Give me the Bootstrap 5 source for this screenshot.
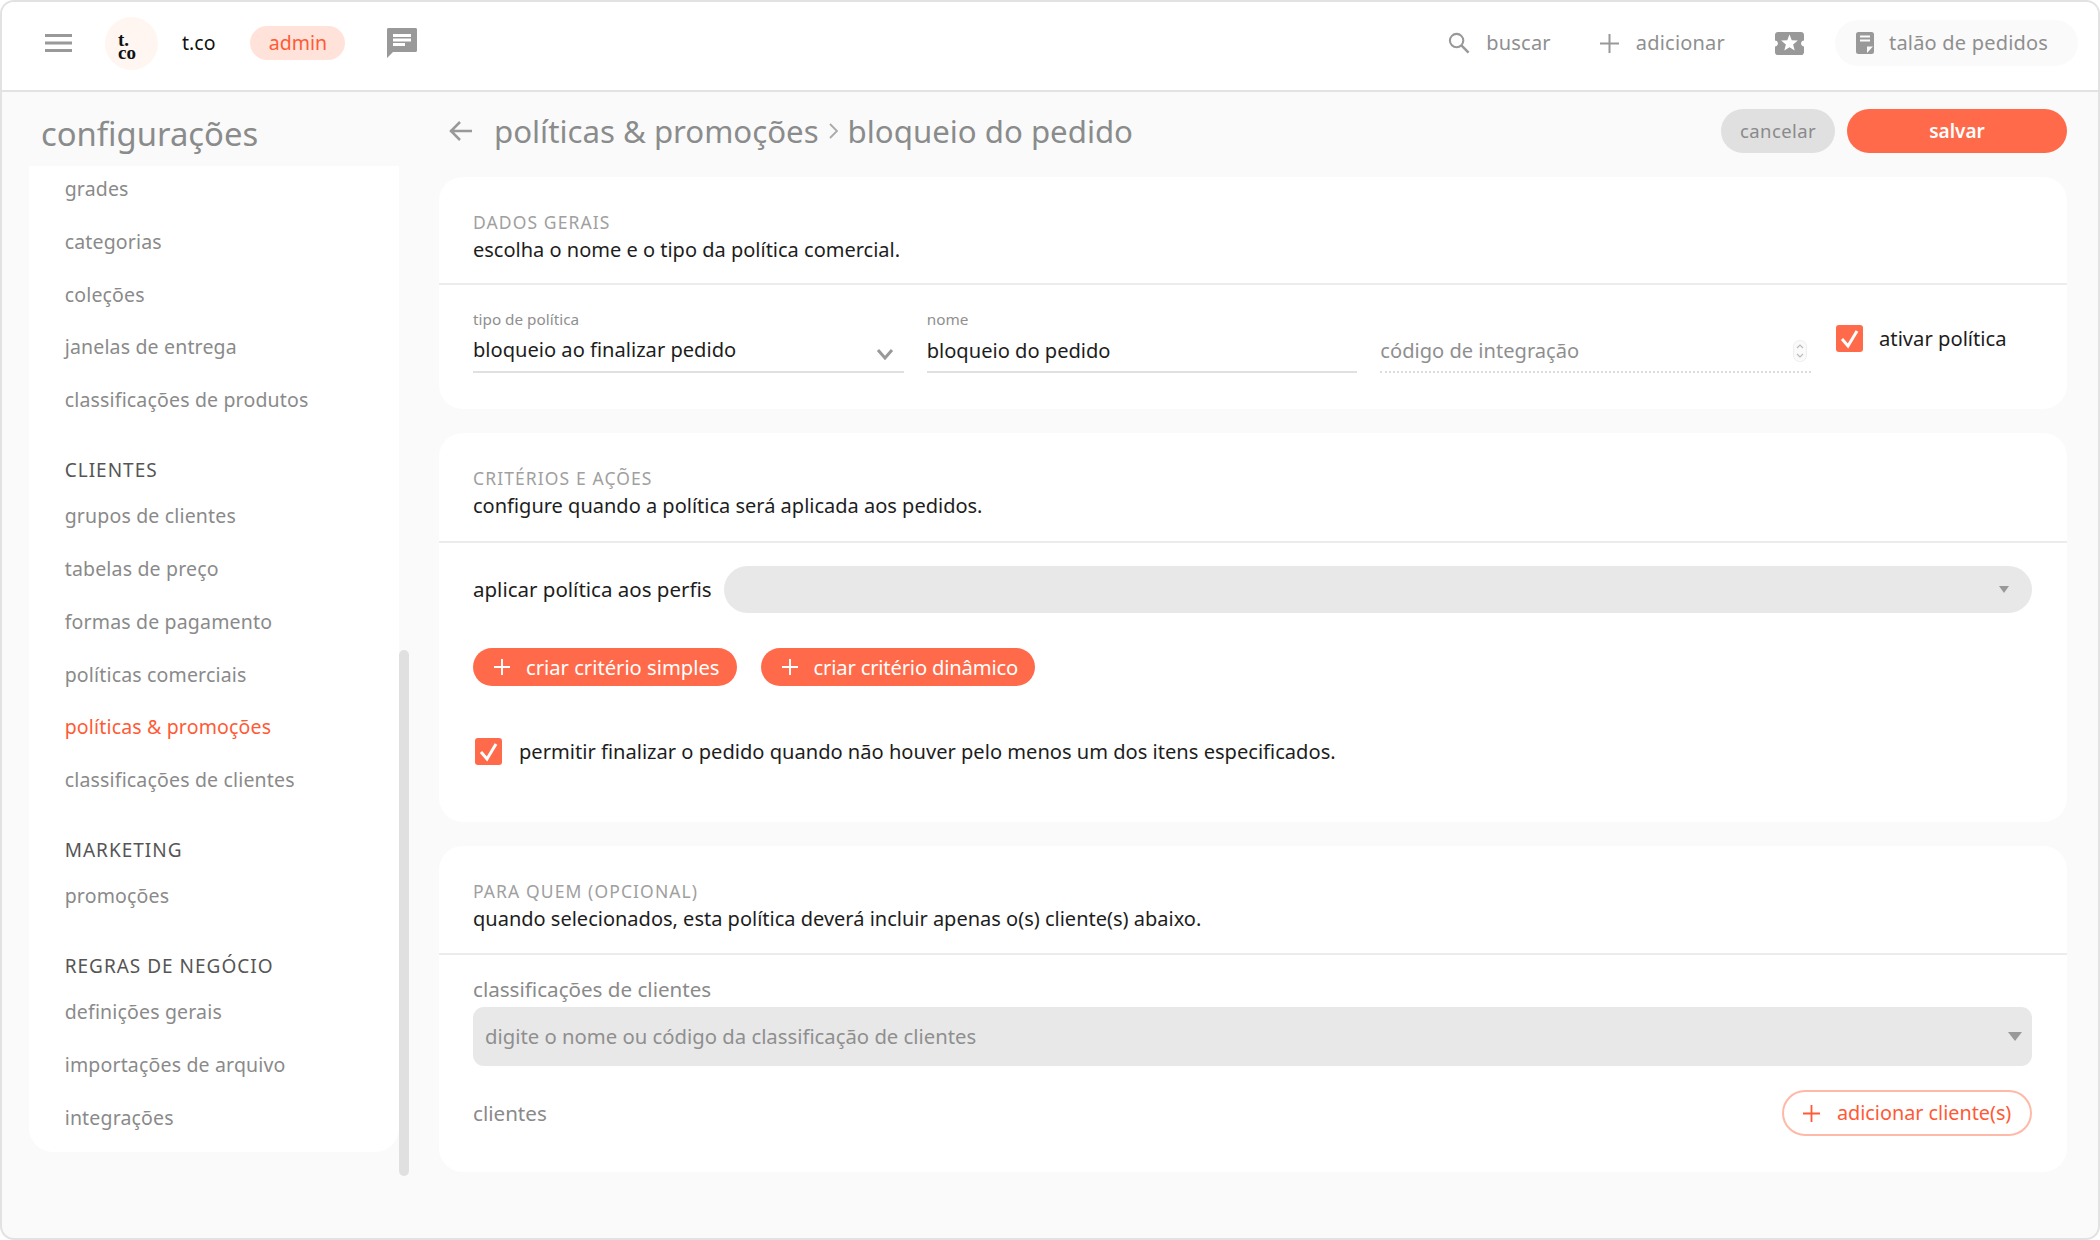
<!doctype html>
<html lang="pt-BR">
<head>
<meta charset="utf-8">
<title>configurações</title>
<link href="https://cdn.jsdelivr.net/npm/bootstrap@5.3.0/dist/css/bootstrap.min.css" rel="stylesheet">
<style>
html,body{height:100%;margin:0;background:#fff;}
body{font-family:"Noto Sans","Open Sans",sans-serif;font-size:20px;color:#1d1d1d;overflow:hidden;}
.frame{width:2100px;height:1240px;border:2px solid #e2e2e2;border-radius:14px;background:#fafafa;overflow:hidden;display:flex;flex-direction:column;}
.topbar{height:90px;flex:none;background:#fff;border-bottom:2px solid #e2e2e2;padding:0 20px 6px 43px;}
.muted-ic{fill:#999;display:block;flex:none;}
.avatar{width:53px;height:53px;border-radius:50%;background:#fff6f1;margin-left:33px;flex:none;padding:16px 0 0 13px;}
.avatar-text{display:block;width:24px;font-family:"Liberation Serif",serif;font-weight:700;color:#111;font-size:19px;line-height:13px;}
.brand{margin-left:24px;font-size:19.5px;color:#111;}
.role-pill{margin-left:35px;height:34px;width:95px;border-radius:17px;background:#ffe3da;color:#ff5a35;display:flex;align-items:center;justify-content:center;font-size:19.5px;}
.msg-ic{margin-left:42px;margin-top:-1px;}
.top-act{color:#8f8f8f;font-size:20px;letter-spacing:.2px;display:flex;align-items:center;}
.act-search{gap:16px;margin-right:49px;}
.act-add{gap:17px;}
.ticket-ic{margin-left:50px;}
.order-pill{width:243px;height:46px;border-radius:23px;background:#fafafa;padding-left:21px;gap:15px;margin-left:31px;}
.layout{flex:1;min-height:0;}
.side{width:437px;flex:none;position:relative;}
.side-title{font-size:32.8px;color:#8a8c8c;margin:20px 0 0 39px;height:54px;line-height:44px;font-weight:400;}
.side-box{width:370px;margin-left:27px;background:#fff;border-radius:0 0 24px 24px;overflow:hidden;padding-bottom:7px;}
.side-list{margin-top:-3px;padding-left:0;list-style:none;margin-bottom:0;}
.side-item{height:52.8px;line-height:52.8px;padding-left:35.700px;color:#8a8a8a;font-size:19.5px;letter-spacing:.17px;white-space:nowrap;}
.side-item.on{color:#ff5a35;}
.side-head{height:63.2px;padding:25px 0 0 35.700px;line-height:37px;color:#555;font-size:19px;letter-spacing:1px;}
.side-thumb{position:absolute;left:397px;top:558px;width:10px;height:526px;background:#e0e0e0;border-radius:5px;}
.content{flex:1;min-width:0;padding-right:31px;}
.page-head{height:85px;padding-top:17px;}
.back-ic{margin:0 21px 0 9px;}
.crumb{font-size:31.2px;color:#8a8c8c;line-height:44px;white-space:nowrap;}
.crumb-sep{margin:0 9px 0 9px;}
.btn-cancel,.btn-save{height:44px;border-radius:22px;border:0;display:flex;align-items:center;justify-content:center;padding:0;}
.btn-cancel{width:114px;background:#e0e0e0;color:#8a8a8a;letter-spacing:.4px;font-size:18.5px;}
.btn-save{width:220px;background:#ff6b4a;color:#fff;font-weight:600;font-size:19px;}
.btn-cancel:hover{background:#e0e0e0;color:#8a8a8a;}
.btn-save:hover{background:#ff6b4a;color:#fff;}
.pane{border:0;border-radius:24px;background:#fff;margin-bottom:24px;}
.pane .card-header{background:transparent;border:0;border-bottom:2px solid #ececec;padding:0 0 0 34px;border-radius:24px 24px 0 0;}
.pane .card-body{padding:0 35px 0 34px;}
.head-a{height:108px;}
.head-b{height:110px;}
.head-c{height:109px;}
.body-a{height:124px;}
.pane-over{font-size:17.5px;color:#a0a0a0;letter-spacing:1.1px;line-height:24px;padding-top:33px;}
.pane-sub{font-size:20px;color:#1d1d1d;line-height:31px;}
.f-row{gap:23px;}
.f-label{font-size:15.3px;color:#8f8f8f;line-height:20px;margin-top:24px;}
.f-control.form-control,.f-control.form-select{border:0;border-bottom:2px solid #e0e0e0;border-radius:0;padding:1px 0 0;height:44px;font-size:20.1px;color:#1d1d1d;background-color:transparent;box-shadow:none;}
.f-control.form-select{background-position:right 10px top 19px;background-size:18px 12px;background-image:url("data:image/svg+xml,%3csvg xmlns='http://www.w3.org/2000/svg' viewBox='0 0 18 12'%3e%3cpath fill='none' stroke='%23999' stroke-width='3' d='M2 2l7 8 7-8'/%3e%3c/svg%3e");}
.f-control.dotted{border-bottom:2px dotted #dcdcdc;color:#8f8f8f;}
.f-control.dotted::placeholder{color:#8f8f8f;opacity:1;}
.f-wrap{position:relative;flex:1 1 0;min-width:0;}
.spin{position:absolute;right:4px;top:55px;width:14px;height:22px;display:block;}
.chk.form-check-input,.chk.form-check-input:checked{width:27px;height:27px;margin:0;border:0;border-radius:3px;background-color:#ff6b4a;flex:none;background-size:100% 100%;box-shadow:none;opacity:1;float:none;background-image:url("data:image/svg+xml,%3csvg xmlns='http://www.w3.org/2000/svg' viewBox='0 0 27 27'%3e%3cpath fill='none' stroke='%23fff' stroke-width='3' d='M6 14l6 7 9-15'/%3e%3c/svg%3e");}
.chk-label{color:#1d1d1d;font-size:20.2px;line-height:27px;}
.active-col{width:231px;flex:none;height:67px;margin-top:40px;gap:16px;margin-left:2px;margin-right:-35px;}
.crit-row{margin-top:23px;}
.crit-label{width:251px;flex:none;font-size:20.5px;color:#1d1d1d;}
.round-sel.form-select{height:47px;border:0;border-radius:24px;background-color:#e8e8e8;background-image:url("data:image/svg+xml,%3csvg xmlns='http://www.w3.org/2000/svg' viewBox='0 0 12 9'%3e%3cpath fill='%23999' d='M1 1h10L6 8z'/%3e%3c/svg%3e");background-size:12px 9px;background-position:right 22px center;box-shadow:none;}
.btn-make{height:38px;border-radius:19px;border:0;background:#ff6b4a;color:#fff;font-size:20.2px;display:flex;align-items:center;padding:0 17px 0 21px;gap:16px;white-space:nowrap;}
.btn-make:hover{background:#ff6b4a;color:#fff;}
.btn-tight{letter-spacing:-.17px;}
.make-row{margin-top:35px;gap:24px;}
.allow-row{margin-top:52px;gap:17px;padding:0 0 57px 2px;}
.allow-row .chk-label{font-size:20.1px;}
.f-title{font-size:20.6px;color:#8a8a8a;line-height:28px;margin-top:20px;}
.square-sel.form-select{height:59px;border:0;border-radius:11px;background-color:#e8e8e8;color:#8f8f8f;font-size:20.3px;padding:0 40px 0 12px;background-image:url("data:image/svg+xml,%3csvg xmlns='http://www.w3.org/2000/svg' viewBox='0 0 14 9'%3e%3cpath fill='%23999' d='M0 0h14L7 9z'/%3e%3c/svg%3e");background-size:14px 9px;background-position:right 10px center;box-shadow:none;margin-top:4px;}
.cli-row{margin-top:24px;padding-bottom:36px;}
.cli-label{font-size:20.6px;color:#8a8a8a;}
.btn-add{width:250px;height:46px;border-radius:23px;border:2px solid #ffb9a8;background:#fff;color:#ff5a35;font-size:19.8px;display:flex;align-items:center;gap:17px;padding:0 0 0 19px;white-space:nowrap;}
.btn-add:hover{background:#fff;color:#ff5a35;border-color:#ffb9a8;}
</style>
</head>
<body>
<div class="frame">
  <nav class="navbar topbar d-flex flex-nowrap justify-content-between">
    <div class="d-flex align-items-center">
      <svg class="muted-ic" width="27" height="18" viewBox="0 0 27 18"><rect width="27" height="3" y="0"/><rect width="27" height="3" y="7.500"/><rect width="27" height="3" y="15"/></svg>
      <div class="avatar"><span class="avatar-text">t. co</span></div>
      <span class="brand">t.co</span>
      <span class="role-pill">admin</span>
      <svg class="muted-ic msg-ic" width="30" height="30" viewBox="2 2 20 20"><path d="M21 2H3c-.6 0-1 .4-1 1v19l4-4h15c.6 0 1-.4 1-1V3c0-.6-.4-1-1-1zM6 9h12v2H6V9zm8 5H6v-2h8v2zm4-6H6V6h12v2z"/></svg>
    </div>
    <div class="d-flex align-items-center">
      <div class="top-act act-search">
        <svg class="muted-ic" width="22" height="22" viewBox="0 0 23 23"><circle cx="9" cy="9" r="7" fill="none" stroke="#999" stroke-width="2.200"/><path d="M14 14l7.500 7.500" stroke="#999" stroke-width="2.600"/></svg>
        <span>buscar</span>
      </div>
      <div class="top-act act-add">
        <svg class="muted-ic" width="19" height="19" viewBox="0 0 19 19"><path d="M8.500 0h2v8.500H19v2h-8.500V19h-2v-8.500H0v-2h8.500z"/></svg>
        <span>adicionar</span>
      </div>
      <svg class="muted-ic ticket-ic" width="29" height="29" viewBox="2 2 20 20"><path d="M20 12c0-1.100.9-2 2-2V6c0-1.100-.9-2-2-2H4c-1.100 0-2 .9-2 2v4c1.100 0 2 .9 2 2s-.9 2-2 2v4c0 1.100.9 2 2 2h16c1.100 0 2-.9 2-2v-4c-1.100 0-2-.9-2-2zm-4.420 4.800L12 14.500l-3.580 2.300 1.080-4.120-3.290-2.690 4.240-.25L12 5.800l1.540 3.950 4.240.25-3.290 2.690 1.090 4.110z"/></svg>
      <div class="top-act order-pill">
        <svg class="muted-ic" width="18" height="22" viewBox="0 0 18 22"><path fill-rule="evenodd" d="M2.500 0h13A2.500 2.500 0 0 1 18 2.500v17a2.500 2.500 0 0 1-2.500 2.500h-13A2.500 2.500 0 0 1 0 19.500v-17A2.500 2.500 0 0 1 2.500 0zM4 3.500v2h10v-2zm0 4v2h10v-2zM11 21V14.500h6z"/></svg>
        <span>talão de pedidos</span>
      </div>
    </div>
  </nav>
  <div class="layout d-flex">
    <aside class="side">
      <h1 class="side-title">configurações</h1>
      <div class="side-box">
        <ul class="side-list">
          <li class="side-item">grades</li>
          <li class="side-item">categorias</li>
          <li class="side-item">coleções</li>
          <li class="side-item">janelas de entrega</li>
          <li class="side-item">classificações de produtos</li>
          <li class="side-head">CLIENTES</li>
          <li class="side-item">grupos de clientes</li>
          <li class="side-item">tabelas de preço</li>
          <li class="side-item">formas de pagamento</li>
          <li class="side-item">políticas comerciais</li>
          <li class="side-item on">políticas &amp; promoções</li>
          <li class="side-item">classificações de clientes</li>
          <li class="side-head">MARKETING</li>
          <li class="side-item">promoções</li>
          <li class="side-head">REGRAS DE NEGÓCIO</li>
          <li class="side-item">definições gerais</li>
          <li class="side-item">importações de arquivo</li>
          <li class="side-item">integrações</li>
        </ul>
      </div>
      <div class="side-thumb"></div>
    </aside>
    <main class="content">
      <div class="page-head d-flex align-items-start justify-content-between">
        <div class="d-flex align-items-center">
          <svg class="back-ic" width="25" height="24" viewBox="0 0 25 24"><path d="M24 12H2M12 3l-9 9 9 9" fill="none" stroke="#999" stroke-width="2.500"/></svg>
          <span class="crumb">políticas &amp; promoções</span>
          <svg class="crumb-sep" width="11" height="18" viewBox="0 0 11 18"><path d="M2 2l7 7-7 7" fill="none" stroke="#aaa" stroke-width="1.800"/></svg>
          <span class="crumb">bloqueio do pedido</span>
        </div>
        <div class="d-flex" style="gap:12px">
          <button type="button" class="btn btn-cancel">cancelar</button>
          <button type="button" class="btn btn-save">salvar</button>
        </div>
      </div>

      <section class="card pane">
        <div class="card-header head-a">
          <div class="pane-over">DADOS GERAIS</div>
          <div class="pane-sub">escolha o nome e o tipo da política comercial.</div>
        </div>
        <div class="card-body body-a">
          <div class="d-flex f-row">
            <div class="f-wrap">
              <div class="f-label">tipo de política</div>
              <select class="form-select f-control"><option>bloqueio ao finalizar pedido</option></select>
            </div>
            <div class="f-wrap">
              <div class="f-label">nome</div>
              <input class="form-control f-control" value="bloqueio do pedido">
            </div>
            <div class="f-wrap">
              <div class="f-label">&nbsp;</div>
              <input class="form-control f-control dotted" placeholder="código de integração">
              <svg class="spin" viewBox="0 0 14 22"><rect x=".5" y=".5" width="13" height="21" rx="6" fill="#fafafa" stroke="#eee"/><path d="M4 8l3-3 3 3M4 14l3 3 3-3" fill="none" stroke="#bbb" stroke-width="1.200"/></svg>
            </div>
            <div class="active-col d-flex align-items-start">
              <input class="form-check-input chk" type="checkbox" checked aria-label="ativar política">
              <span class="chk-label">ativar política</span>
            </div>
          </div>
        </div>
      </section>

      <section class="card pane">
        <div class="card-header head-b">
          <div class="pane-over">CRITÉRIOS E AÇÕES</div>
          <div class="pane-sub">configure quando a política será aplicada aos pedidos.</div>
        </div>
        <div class="card-body">
          <div class="crit-row d-flex align-items-center">
            <span class="crit-label">aplicar política aos perfis</span>
            <select class="form-select round-sel" aria-label="perfis"></select>
          </div>
          <div class="make-row d-flex">
            <button type="button" class="btn btn-make"><svg width="16" height="16" viewBox="0 0 15 15"><path d="M6.600 0h1.800v6.600H15v1.800H8.400V15H6.600V8.400H0V6.600h6.600z" fill="#fff"/></svg>criar critério simples</button>
            <button type="button" class="btn btn-make btn-tight"><svg width="16" height="16" viewBox="0 0 15 15"><path d="M6.600 0h1.800v6.600H15v1.800H8.400V15H6.600V8.400H0V6.600h6.600z" fill="#fff"/></svg>criar critério dinâmico</button>
          </div>
          <div class="allow-row d-flex align-items-center">
            <input class="form-check-input chk" type="checkbox" checked aria-label="permitir">
            <span class="chk-label">permitir finalizar o pedido quando não houver pelo menos um dos itens especificados.</span>
          </div>
        </div>
      </section>

      <section class="card pane">
        <div class="card-header head-c">
          <div class="pane-over">PARA QUEM (OPCIONAL)</div>
          <div class="pane-sub">quando selecionados, esta política deverá incluir apenas o(s) cliente(s) abaixo.</div>
        </div>
        <div class="card-body">
          <div class="f-title">classificações de clientes</div>
          <select class="form-select square-sel"><option>digite o nome ou código da classificação de clientes</option></select>
          <div class="cli-row d-flex align-items-center justify-content-between">
            <span class="cli-label">clientes</span>
            <button type="button" class="btn btn-add"><svg width="17" height="17" viewBox="0 0 17 17"><path d="M7.600 0h1.800v7.600H17v1.800H9.400V17H7.600V9.400H0V7.600h7.600z" fill="#ff5a35"/></svg>adicionar cliente(s)</button>
          </div>
        </div>
      </section>
    </main>
  </div>
</div>
<script src="https://cdn.jsdelivr.net/npm/bootstrap@5.3.0/dist/js/bootstrap.bundle.min.js"></script>
</body>
</html>
